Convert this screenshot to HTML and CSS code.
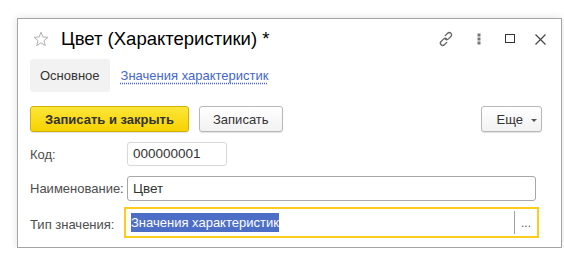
FILE: index.html
```html
<!DOCTYPE html>
<html lang="ru">
<head>
    <meta charset="UTF-8">
    <title>Цвет (Характеристики)</title>
    <link rel="stylesheet" href="styles.css">
</head>
<body>
    <div class="window">
        <div class="header">
            <svg class="star" width="16" height="16" viewBox="0 0 16 16">
                <path d="M8 1.2 L9.9 6 L15 6.3 L11 9.6 L12.3 14.6 L8 11.8 L3.7 14.6 L5 9.6 L1 6.3 L6.1 6 Z" fill="none" stroke="#b0b0b0" stroke-width="1"/>
            </svg>
            <div class="title">Цвет (Характеристики) *</div>
            <div class="tools">
                <svg width="18" height="16" viewBox="0 0 18 16">
                    <g fill="none" stroke="#666" stroke-width="1.3" stroke-linecap="round">
                        <path d="M8.2 4.6 L10.6 2.2 a2.3 2.3 0 0 1 3.3 3.3 L11.5 7.9 a2.3 2.3 0 0 1 -3.2 0.1"/>
                        <path d="M9.8 11.4 L7.4 13.8 a2.3 2.3 0 0 1 -3.3 -3.3 L6.5 8.1 a2.3 2.3 0 0 1 3.2 -0.1"/>
                    </g>
                </svg>
                <svg width="4" height="12" viewBox="0 0 4 12">
                    <g fill="#777">
                        <rect x="0.5" y="0.5" width="3" height="3"/>
                        <rect x="0.5" y="4.5" width="3" height="3"/>
                        <rect x="0.5" y="8.5" width="3" height="3"/>
                    </g>
                </svg>
                <svg width="10" height="10" viewBox="0 0 10 10">
                    <rect x="0.5" y="0.5" width="9" height="8" fill="none" stroke="#333" stroke-width="1"/>
                </svg>
                <svg width="11" height="11" viewBox="0 0 11 11">
                    <path d="M0.5 0.5 L10.5 10.5 M10.5 0.5 L0.5 10.5" stroke="#444" stroke-width="1.2"/>
                </svg>
            </div>
        </div>

        <div class="tabs">
            <div class="tab active">Основное</div>
            <a class="tab link">Значения характеристик</a>
        </div>

        <div class="toolbar">
            <button class="btn primary">Записать и закрыть</button>
            <button class="btn">Записать</button>
            <button class="btn more">Еще <span class="arrow"></span></button>
        </div>

        <div class="field">
            <label>Код:</label>
            <div class="input short">000000001</div>
        </div>
        <div class="field">
            <label>Наименование:</label>
            <div class="input wide">Цвет</div>
        </div>
        <div class="field">
            <label>Тип значения:</label>
            <div class="input focus">
                <span class="value"><span class="selected">Значения характеристик</span></span>
                <span class="choose">...</span>
            </div>
        </div>
    </div>
</body>
</html>
```

FILE: styles.css
```css
body {
    margin: 0;
    padding: 18px 0 0 17px;
    background-color: #fff;
    font-family: "Liberation Sans", Arial, sans-serif;
    color: #4d4d4d;
}

.window {
    box-sizing: border-box;
    width: 545px;
    height: 230px;
    padding: 0 12px;
    border: 1px solid #a5a5a5;
    box-shadow: 0 0 8px rgba(0, 0, 0, 0.12);
    background-color: #fff;
}

.header {
    display: flex;
    align-items: center;
    height: 39px;
}
.star {
    margin-left: 3px;
    margin-right: 12px;
}
.title {
    font-size: 18.5px;
    color: #000;
    flex: 1;
}
.tools {
    display: flex;
    align-items: center;
}
.tools svg:nth-child(1) { margin-right: 22px; }
.tools svg:nth-child(2) { margin-right: 24px; }
.tools svg:nth-child(3) { margin-right: 20px; }
.tools svg:nth-child(4) { margin-right: 3px; margin-top: 1px; }

.tabs {
    display: flex;
    align-items: center;
    margin-top: 1px;
    height: 33px;
}
.tab {
    font-size: 13px;
    padding: 0 10px;
    line-height: 33px;
}
.tab.active {
    background-color: #f2f2f2;
    border-radius: 3px;
    color: #333;
}
.tab.link {
    color: #4466cc;
    margin-left: 1px;
    text-decoration: underline dotted;
    text-underline-offset: 3px;
}

.toolbar {
    display: flex;
    margin-top: 14px;
    height: 26px;
}
.btn {
    font-family: inherit;
    font-size: 13px;
    color: #333;
    height: 26px;
    padding: 0 13px;
    border: 1px solid #b8b8b8;
    border-radius: 3px;
    background: linear-gradient(#ffffff, #f2f2f2);
    box-shadow: 0 1px 1px rgba(0, 0, 0, 0.12);
    margin-right: 10px;
}
.btn.primary {
    width: 159px;
    font-weight: bold;
    background: linear-gradient(#fde63a, #f6d300);
    border-color: #d2b000;
}
.btn.more {
    margin-left: auto;
    margin-right: 7px;
    width: 61px;
    padding: 0 0 0 10px;
}
.arrow {
    display: inline-block;
    margin-left: 4px;
    vertical-align: middle;
    border-left: 3px solid transparent;
    border-right: 3px solid transparent;
    border-top: 3px solid #555;
}

.field {
    display: flex;
    align-items: center;
    margin-top: 10px;
    font-size: 13px;
}
.field label {
    width: 97px;
}
.input {
    box-sizing: border-box;
    height: 25px;
    line-height: 23px;
    padding: 0 5px;
    border: 1px solid #c8c8c8;
    border-radius: 3px;
    font-size: 13.5px;
    color: #333;
}
.input.short {
    width: 100px;
    height: 24px;
    line-height: 22px;
    border-color: #d8d8d8;
}
.input.wide {
    width: 409px;
    border-color: #a8a8a8;
}
.input.focus {
    display: flex;
    align-items: center;
    margin-top: -4px;
    margin-left: -3px;
    width: 415px;
    height: 31px;
    padding: 0 0 0 5px;
    border: 2px solid #fbcd1c;
    border-radius: 0;
}
.value {
    flex: 1;
    height: 23px;
    border-right: 1px solid #a0a0a0;
}
.selected {
    background-color: #4d6ec7;
    color: #fff;
    display: inline-block;
    font-size: 13px;
    line-height: 19px;
    margin-top: 2px;
}
.choose {
    width: 22px;
    text-align: center;
    font-size: 12px;
    color: #555;
    line-height: 20px;
}
```
